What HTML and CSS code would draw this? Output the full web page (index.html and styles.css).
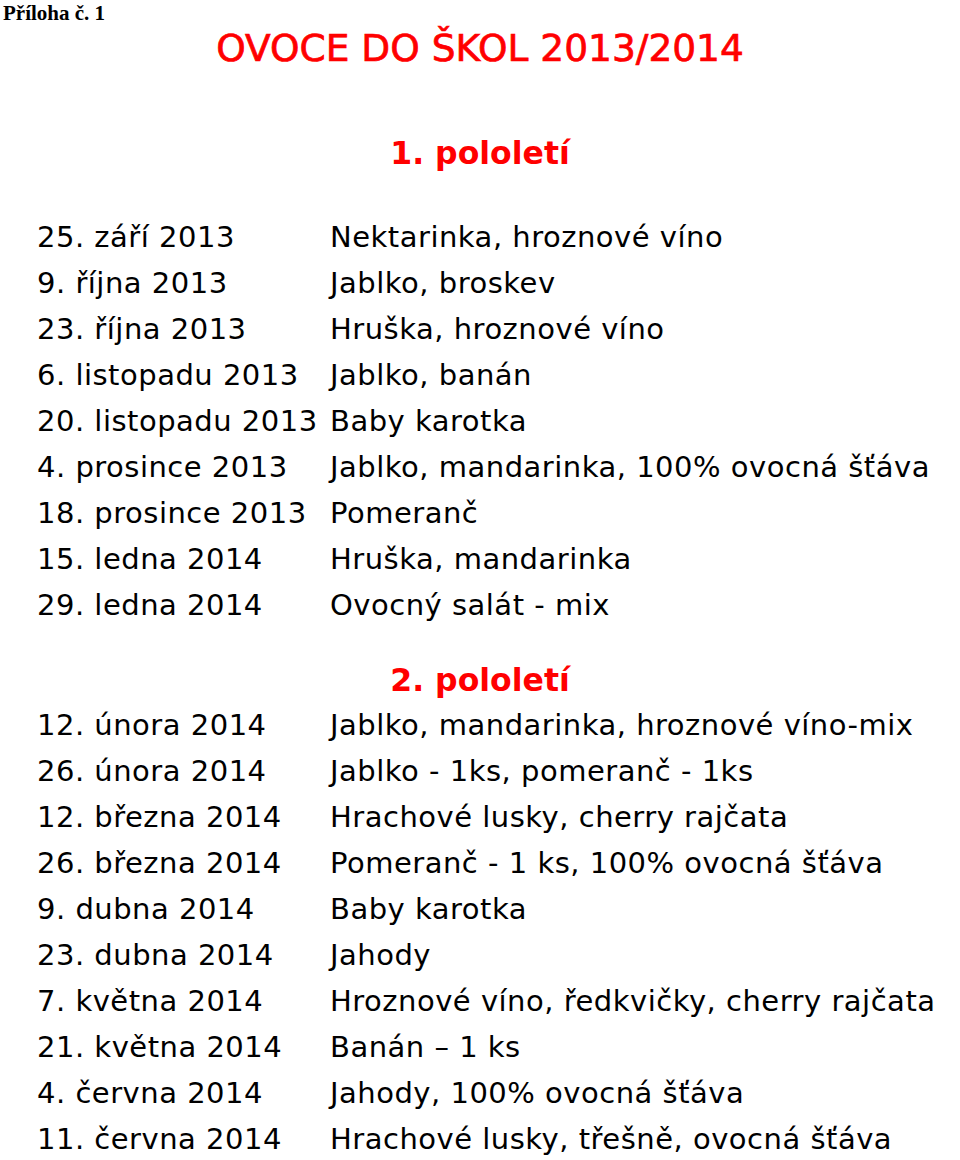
FILE: index.html
```html
<!DOCTYPE html>
<html lang="cs">
<head>
<meta charset="utf-8">
<title>Ovoce do škol 2013/2014</title>
<link rel="stylesheet" href="styles.css">
</head>
<body>
<div class="page">
  <div class="annex">Příloha č. 1</div>
  <h1 class="title">OVOCE DO ŠKOL 2013/2014</h1>
  <h2 class="term term-first">1. pololetí</h2>
  <div class="schedule">
    <div class="date">25. září 2013</div><div class="fruit">Nektarinka, hroznové víno</div>
    <div class="date">9. října 2013</div><div class="fruit">Jablko, broskev</div>
    <div class="date">23. října 2013</div><div class="fruit">Hruška, hroznové víno</div>
    <div class="date">6. listopadu 2013</div><div class="fruit">Jablko, banán</div>
    <div class="date">20. listopadu 2013</div><div class="fruit">Baby karotka</div>
    <div class="date">4. prosince 2013</div><div class="fruit">Jablko, mandarinka, 100% ovocná šťáva</div>
    <div class="date">18. prosince 2013</div><div class="fruit">Pomeranč</div>
    <div class="date">15. ledna 2014</div><div class="fruit">Hruška, mandarinka</div>
    <div class="date">29. ledna 2014</div><div class="fruit">Ovocný salát - mix</div>
  </div>
  <h2 class="term term-second">2. pololetí</h2>
  <div class="schedule">
    <div class="date">12. února 2014</div><div class="fruit">Jablko, mandarinka, hroznové víno-mix</div>
    <div class="date">26. února 2014</div><div class="fruit">Jablko - 1ks, pomeranč - 1ks</div>
    <div class="date">12. března 2014</div><div class="fruit">Hrachové lusky, cherry rajčata</div>
    <div class="date">26. března 2014</div><div class="fruit">Pomeranč - 1 ks, 100% ovocná šťáva</div>
    <div class="date">9. dubna 2014</div><div class="fruit">Baby karotka</div>
    <div class="date">23. dubna 2014</div><div class="fruit">Jahody</div>
    <div class="date">7. května 2014</div><div class="fruit">Hroznové víno, ředkvičky, cherry rajčata</div>
    <div class="date">21. května 2014</div><div class="fruit">Banán – 1 ks</div>
    <div class="date">4. června 2014</div><div class="fruit">Jahody, 100% ovocná šťáva</div>
    <div class="date">11. června 2014</div><div class="fruit">Hrachové lusky, třešně, ovocná šťáva</div>
  </div>
</div>
</body>
</html>
```
FILE: styles.css
```css
html, body {
  margin: 0;
  padding: 0;
  background: #ffffff;
}
.page {
  width: 960px;
  height: 1160px;
  overflow: hidden;
  font-family: "DejaVu Sans", "Noto Sans", sans-serif;
  color: #000;
}
.annex {
  font-family: "Liberation Serif", serif;
  font-weight: bold;
  font-size: 21px;
  line-height: 22px;
  padding: 2px 0 0 3px;
}
.title {
  margin: 0;
  text-align: center;
  font-size: 37.5px;
  line-height: 48px;
  font-weight: normal;
  color: #ff0000;
  -webkit-text-stroke: 0.7px #ff0000;
}
.term {
  margin: 0;
  text-align: center;
  font-size: 31.5px;
  line-height: 46px;
  font-weight: bold;
  color: #ff0000;
}
.term-first {
  margin-top: 58px;
  margin-bottom: 38px;
}
.term-second {
  margin-top: 30px;
  margin-bottom: 0;
  line-height: 44px;
}
.schedule {
  display: grid;
  grid-template-columns: 293px 1fr;
  padding-left: 37px;
  font-size: 29px;
  letter-spacing: 0.5px;
  line-height: 46px;
}
.date, .fruit {
  white-space: nowrap;
}
```
